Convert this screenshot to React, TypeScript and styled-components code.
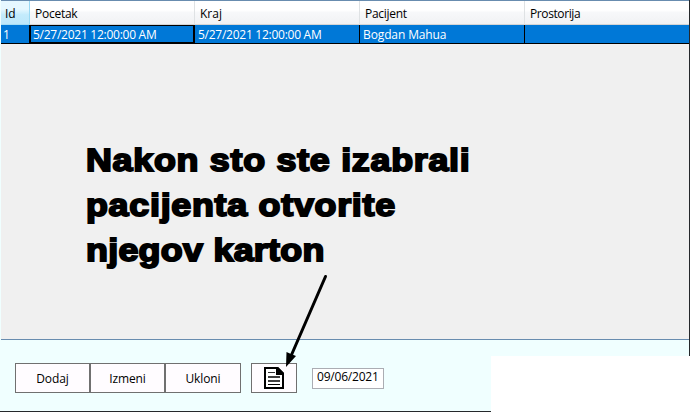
import React from 'react';
import styled, { createGlobalStyle } from 'styled-components';

const GlobalStyle = createGlobalStyle`
  * { box-sizing: border-box; }
  body { margin: 0; overflow: hidden; }
`;

const Window = styled.main`
  position: relative;
  width: 690px;
  height: 412px;
  display: flex;
  flex-direction: column;
  background: #f0ffff;
  border-right: 1px solid #25282b;
  border-bottom: 1px solid #25282b;
  font: 12px/16px 'Open Sans', 'Noto Sans', sans-serif;
  color: #000;
`;

const DataGrid = styled.section`
  height: 340px;
  margin-left: 1px;
  border-top: 1px solid #688caf;
  border-bottom: 1px solid #688caf;
  background: #f0f0f0;
`;

const Row = styled.div`
  display: grid;
  grid-template-columns: 29px 165px 165px 165px 1fr;
`;

const HeaderRow = styled(Row)`
  height: 24px;
`;

const HeaderCell = styled.div<{ $active?: boolean }>`
  padding: 5px 0 0 ${p => (p.$active ? 4 : 5)}px;
  border-right: 1px solid ${p => (p.$active ? '#9ad9f3' : '#dfe2e4')};
  border-bottom: 1px solid ${p => (p.$active ? '#a5ddf4' : '#d5d5d5')};
  background: ${p => (p.$active
    ? 'linear-gradient(#e6f8ff 0 35%, #c3ebfc 60%, #bde8fb)'
    : 'linear-gradient(#fff 0 40%, #f7f8fa 50%, #f1f2f4)')};
  &:last-child { border-right: 0; }
`;

const Label = styled.span<{ $spacing?: number }>`
  display: block;
  white-space: nowrap;
  letter-spacing: ${p => p.$spacing ?? 0}px;
`;

const DataRow = styled(Row)`
  height: 19px;
  background: #0078d7;
  color: #fff;
  border-bottom: 1px solid #000;
`;

const DataCell = styled.div<{ $focused?: boolean }>`
  height: ${p => (p.$focused ? 19 : 18)}px;
  margin-left: ${p => (p.$focused ? -1 : 0)}px;
  padding: ${p => (p.$focused ? '0 0 0 2px' : '1px 0 0 3px')};
  border: 0 solid #000;
  border-width: ${p => (p.$focused ? '1px 2px 2px' : '0 1px 0 0')};
  line-height: 17px;
  &:first-child { padding-left: 2px; border-right: 0; }
  &:last-child { border-right: 0; }
`;

const Footer = styled.footer`
  flex: 1;
  display: flex;
  align-items: flex-start;
  padding: 23px 0 0 15px;
`;

const Button = styled.button<{ $width: number }>`
  width: ${p => p.$width}px;
  height: 30px;
  padding: 0;
  display: grid;
  place-items: center;
  border: 1px solid #707070;
  background: #fffcff;
  font: inherit;
  color: inherit;
`;

const ButtonLabel = styled(Label)`
  padding-top: 2px;
`;

const DocumentButton = styled(Button)`
  margin-left: 10px;
`;

const DateField = styled.div`
  width: 72px;
  height: 21px;
  margin: 5px 0 0 15px;
  padding: 0 0 0 4px;
  border: 1px solid #abadb3;
  background: #fff;
`;

const Note = styled.p`
  position: absolute;
  left: 86px;
  top: 138px;
  margin: 0;
  font: 700 32px/45px 'Liberation Sans', Arial, sans-serif;
  -webkit-text-stroke: 1.9px #000;
  transform: scaleX(1.12);
  transform-origin: 0 0;
`;

const NoteLine = styled.span<{ $spacing: number }>`
  display: block;
  white-space: nowrap;
  letter-spacing: ${p => p.$spacing}px;
`;

const Arrow = styled.svg`
  position: absolute;
  left: 280px;
  top: 270px;
`;

const BlankPanel = styled.div`
  position: absolute;
  left: 491px;
  top: 356px;
  width: 199px;
  height: 56px;
  background: #fff;
`;

const columns = [
  { title: 'Id', value: '1', titleSpacing: 0, valueSpacing: 0 },
  { title: 'Pocetak', value: '5/27/2021 12:00:00 AM', titleSpacing: -0.25, valueSpacing: -0.26 },
  { title: 'Kraj', value: '5/27/2021 12:00:00 AM', titleSpacing: 0, valueSpacing: -0.26 },
  { title: 'Pacijent', value: 'Bogdan Mahua', titleSpacing: -0.3, valueSpacing: -0.12 },
  { title: 'Prostorija', value: '', titleSpacing: -0.4, valueSpacing: 0 },
];

const actions = [
  { label: 'Dodaj', width: 75 },
  { label: 'Izmeni', width: 75 },
  { label: 'Ukloni', width: 76 },
];

const noteLines = [
  { text: 'Nakon sto ste izabrali', spacing: 0.65 },
  { text: 'pacijenta otvorite', spacing: 0.65 },
  { text: 'njegov karton', spacing: 0.25 },
];

function DocumentIcon() {
  return (
    <svg width="22" height="24" viewBox="0 0 22 24" fill="none">
      <path d="M2 2H14l6 6v14H2Z" fill="#fff" />
      <path d="M1 1H15L21 7V23H1ZM3 3V21H19V8H14V3Z" fill="#000" fillRule="evenodd" />
      <path d="M13 1H15L21 7V9H13Z" fill="#000" />
      <path d="M5 6.5H12" stroke="#333" />
      <path d="M5 11H17M5 15H17" stroke="#000" strokeWidth="1.6" />
      <path d="M5 18.5H17" stroke="#000" />
    </svg>
  );
}

export default function App() {
  return (
    <Window>
      <GlobalStyle />
      <DataGrid>
        <HeaderRow>
          {columns.map((c, i) => (
            <HeaderCell key={c.title} $active={i === 0}>
              <Label $spacing={c.titleSpacing}>{c.title}</Label>
            </HeaderCell>
          ))}
        </HeaderRow>
        <DataRow>
          {columns.map((c, i) => (
            <DataCell key={c.title} $focused={i === 1}>
              <Label $spacing={c.valueSpacing}>{c.value}</Label>
            </DataCell>
          ))}
        </DataRow>
      </DataGrid>
      <Footer>
        {actions.map(a => (
          <Button key={a.label} $width={a.width}><ButtonLabel $spacing={-0.1}>{a.label}</ButtonLabel></Button>
        ))}
        <DocumentButton $width={46} aria-label="Karton"><DocumentIcon /></DocumentButton>
        <DateField><Label $spacing={-0.2}>09/06/2021</Label></DateField>
      </Footer>
      <BlankPanel />
      <Note>
        {noteLines.map(l => (
          <NoteLine key={l.text} $spacing={l.spacing}>{l.text}</NoteLine>
        ))}
      </Note>
      <Arrow width="54" height="104" viewBox="0 0 54 104">
        <path d="M45.5 6.5L11 86" stroke="#000" strokeWidth="3" strokeLinecap="round" />
        <path d="M6 97L6.5 82L11 84L16 86Z" fill="#000" />
      </Arrow>
    </Window>
  );
}
